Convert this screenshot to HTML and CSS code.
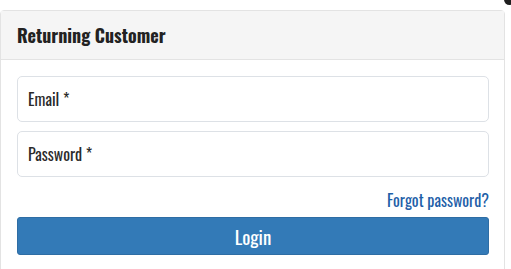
FILE: index.html
```html
<!DOCTYPE html>
<html lang="en">
<head>
    <meta charset="UTF-8">
    <meta name="viewport" content="width=device-width, initial-scale=1.0">
    <title>Login</title>
    <link rel="stylesheet" href="styles.css">
</head>
<body>
    <span class="corner-dot"></span>
    <div class="panel">
        <div class="panel-heading">
            <h3>Returning Customer</h3>
        </div>
        <div class="panel-body">
            <input type="email" class="field" placeholder="Email *">
            <input type="password" class="field" placeholder="Password *">
            <div class="forgot">
                <a href="#">Forgot password?</a>
            </div>
            <button class="btn-login">Login</button>
        </div>
    </div>
</body>
</html>
```

FILE: styles.css
```css
body {
    font-family: "Oswald", "Roboto Condensed", "Liberation Sans", sans-serif;
    background: white;
    margin: 0;
    padding: 10px 6px 0 0;
    overflow: hidden;
}

.corner-dot {
    position: absolute;
    top: -6px;
    right: -4px;
    width: 11px;
    height: 11px;
    border-radius: 50%;
    background: #1e1e1e;
}

.panel {
    border: 1px solid #e3e3e3;
    border-radius: 4px;
    background: white;
    height: 300px;
}

.panel-heading {
    background: #f5f5f5;
    border-bottom: 1px solid #e3e3e3;
    padding: 0 16px;
    height: 48px;
    display: flex;
    align-items: center;
}

.panel-heading h3 {
    margin: 0;
    font-size: 18px;
    font-weight: 700;
    color: #222;
}

.panel-body {
    padding: 16px 15px 0 16px;
    display: flex;
    flex-direction: column;
}

.field {
    height: 46px;
    box-sizing: border-box;
    border: 1px solid #dde1e6;
    border-radius: 5px;
    padding: 0 10px;
    font-family: inherit;
    font-size: 16px;
    font-weight: 400;
    margin-bottom: 9px;
}

.field::placeholder {
    color: #2a2a2a;
}

.forgot {
    text-align: right;
    margin-top: 2px;
    height: 29px;
}

.forgot a {
    color: #1f5fa8;
    text-decoration: none;
    font-size: 16px;
}

.btn-login {
    height: 38px;
    background: #337ab7;
    border: 1px solid #2e6da4;
    border-radius: 3px;
    color: white;
    font-family: inherit;
    font-size: 19px;
    cursor: pointer;
}
```
